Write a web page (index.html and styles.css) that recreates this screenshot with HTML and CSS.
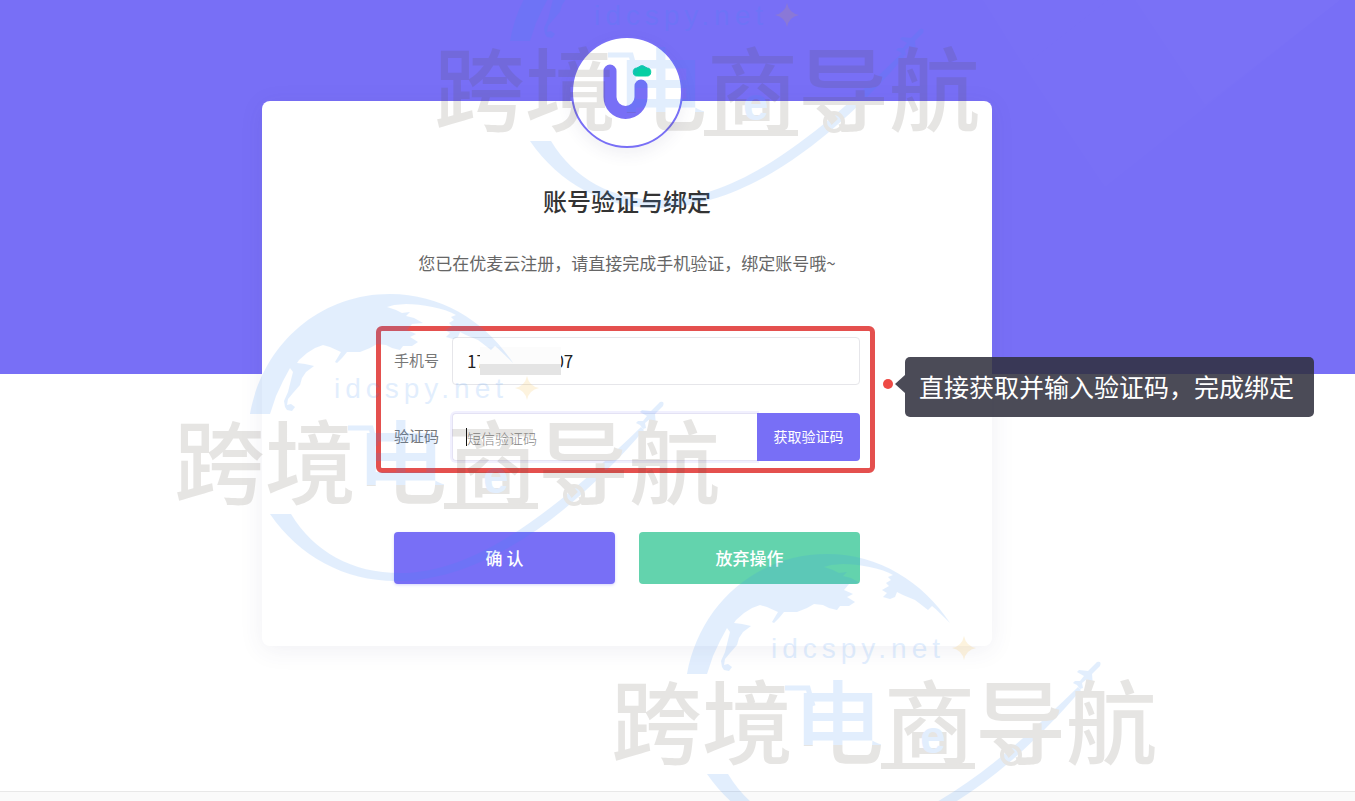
FILE: index.html
```html
<!DOCTYPE html>
<html lang="zh-CN">

<head>
  <meta charset="UTF-8">
  <meta name="viewport" content="width=device-width, initial-scale=1.0">
  <title>账号验证与绑定</title>
  <link rel="stylesheet" href="styles.css">
</head>

<body>
  <!-- shared shapes -->
  <svg class="defs" width="0" height="0" aria-hidden="true">
    <defs>
      <linearGradient id="cart" gradientUnits="userSpaceOnUse" x1="0" y1="138" x2="0" y2="229">
        <stop offset="0.74" stop-color="#378df8" />
        <stop offset="0.74" stop-color="#544c3e" />
      </linearGradient>
      <g id="globe">
        <path fill="#378df8" d="M90 134C102 66 158 14 230 14C282 14 326 42 353 83C346 76 340 70 335 66L331 70L322 63L318 60L306 55L300 52L298 57L293 59L286 57L290 53L285 50L292 46L289 43L294 40L291 37L296 35C284 28 262 24 246 24L234 25L227 27L236 30L242 33L250 32L246 36L254 38L263 43L252 44L247 50L256 54L250 57L258 62L252 66L243 66L240 70L232 68L226 65L217 64L210 68L200 72L187 72L182 78L177 83L175 82L181 72L170 67L163 65L155 68L147 73L139 80L137 83L145 84L154 86L146 92L142 98L140 105L133 113L128 119L127 125L131 124L135 127L132 131L127 130L125 127L124 121L128 112L131 100L133 92L130 88L123 101L116 116L110 134Z" />
        <path fill="#378df8" d="M110 234L131 234C154 272 192 293 240 293C324 293 410 216 481 147L484 150C423 221 333 301 236 301C184 301 139 276 110 234Z" />
        <path fill="#378df8" d="M500 122Q505 121 503 126L495 134L496 146L493 147L490 139L485 143L486 148L483 149L480 145L476 143L478 141L483 141L487 136L480 132L482 130L491 131Z" />
        <path fill="none" stroke="#378df8" stroke-width="5" d="M188 148H211L216 166" />
        <path fill="#f5b021" d="M367 96Q369 106 379 108Q369 110 367 120Q365 110 355 108Q365 106 367 96Z" />
        <circle cx="414" cy="215" r="9" fill="none" stroke="#544c3e" stroke-width="4" />
        <path fill="none" stroke="#544c3e" stroke-width="6" d="M284 226H378" />
      </g>
    </defs>
  </svg>

  <div class="page">
    <svg class="rays" width="375" height="374" viewBox="0 0 375 374" aria-hidden="true">
      <path d="M3 0H128L44 66Z" />
      <path d="M128 0H360L125 187L44 66Z" />
      <path d="M155 0H360L225 105Z" />
    </svg>

    <main class="main">
      <div class="card">
        <div class="logo">
          <svg width="108" height="108" viewBox="0 0 108 108" role="img" aria-label="优麦云">
            <path d="M37 33V59a15.500 15.500 0 0 0 31 0V48" fill="none" stroke="#786ff6" stroke-width="13" stroke-linecap="round" />
            <path d="M64.500 38a4 4 0 0 1 -0.500 -8a3 3 0 0 1 2 -1a4 4 0 0 1 6 0a3 3 0 0 1 2 1a4 4 0 0 1 -0.500 8Z" fill="#06cfa3" stroke="#06cfa3" stroke-width="1" />
          </svg>
        </div>
        <h1 class="title">账号验证与绑定</h1>
        <p class="tip">您已在优麦云注册，请直接完成手机验证，绑定账号哦~</p>

        <form id="bind-form">
          <div class="fields">
            <div class="row">
              <label for="phone">手机号</label>
              <div class="control">
                <input type="text" id="phone" name="phone" value="17                  07">
                <span class="mask"></span>
              </div>
            </div>
            <div class="row">
              <label for="code">验证码</label>
              <div class="control code">
                <input type="text" id="code" name="code" placeholder="短信验证码">
                <span class="caret"></span>
                <button type="button" class="get-code">获取验证码</button>
              </div>
            </div>
            <div class="highlight"></div>
            <div class="note">
              <span class="dot"></span>
              <span class="arrow"></span>
              <span class="note-text">直接获取并输入验证码，完成绑定</span>
            </div>
          </div>
          <div class="actions">
            <button type="submit" class="confirm">确 认</button>
            <button type="button" class="cancel">放弃操作</button>
          </div>
        </form>
      </div>
    </main>

    <footer class="footer"></footer>

    <svg class="watermark wm-top" width="580" height="310" viewBox="0 0 580 310" aria-hidden="true">
      <use href="#globe" />
      <text class="wm-site" x="174" y="118">idcspy.net</text>
      <text class="wm-name" x="14" y="217">跨境<tspan fill="url(#cart)">电</tspan>商导航</text>
      <text class="wm-e" x="323" y="213">e</text>
    </svg>
    <svg class="watermark wm-left" width="580" height="310" viewBox="0 0 580 310" aria-hidden="true">
      <use href="#globe" />
      <text class="wm-site" x="174" y="118">idcspy.net</text>
      <text class="wm-name" x="14" y="217">跨境<tspan fill="url(#cart)">电</tspan>商导航</text>
      <text class="wm-e" x="323" y="213">e</text>
    </svg>
    <svg class="watermark wm-bottom" width="580" height="310" viewBox="0 0 580 310" aria-hidden="true">
      <use href="#globe" />
      <text class="wm-site" x="174" y="118">idcspy.net</text>
      <text class="wm-name" x="14" y="217">跨境<tspan fill="url(#cart)">电</tspan>商导航</text>
      <text class="wm-e" x="323" y="213">e</text>
    </svg>
  </div>
</body>

</html>
```
FILE: styles.css
```css
* {
  box-sizing: border-box;
}

body {
  margin: 0;
  font-family: "Noto Sans CJK SC", sans-serif;
  color: #333;
}

.defs {
  position: absolute;
}

.page {
  position: relative;
  display: flex;
  flex-direction: column;
  min-height: 100vh;
  overflow: hidden;
  background: linear-gradient(#786ff6 374px, #fff 374px);
}

.rays {
  position: absolute;
  top: 0;
  right: 0;
  fill: rgba(255, 255, 255, 0.012);
}

.main {
  position: relative;
  flex: 1;
  padding: 101px 101px 40px 0;
}

.card {
  max-width: 730px;
  margin: 0 auto;
  padding: 0 132px 62px;
  background-color: #fff;
  border-radius: 8px;
  box-shadow: 0 4px 24px rgba(60, 60, 110, 0.08);
  display: flow-root;
}

.logo {
  width: 112px;
  height: 112px;
  margin: -65px auto 36px;
  border: 2px solid #786ff6;
  border-radius: 50%;
  background-color: #fff;
  box-shadow: 0 6px 16px rgba(60, 60, 110, 0.08);
}

.logo svg {
  display: block;
}

.title {
  margin: 0 0 33px;
  font-size: 24px;
  font-weight: 500;
  line-height: 34px;
  text-align: center;
}

.tip {
  margin: 0 -20px 62px;
  font-size: 17px;
  font-weight: 400;
  line-height: 24px;
  text-align: center;
  color: #666;
}

.fields {
  position: relative;
  display: flex;
  flex-direction: column;
  gap: 28px;
}

.row {
  display: grid;
  grid-template-columns: 58px 1fr;
  align-items: center;
}

label {
  padding-bottom: 4px;
  font-size: 15px;
  color: #777;
}

.control {
  position: relative;
  display: flex;
}

input {
  flex: 1;
  min-width: 0;
  height: 48px;
  padding: 0 14px 2px;
  border: 1px solid #e6e6ea;
  border-radius: 4px;
  background-color: #fff;
  font-family: inherit;
  font-size: 17px;
  color: #222;
  outline: none;
}

input::placeholder {
  font-size: 14px;
  font-weight: 300;
  color: #888;
}

.code input {
  border-color: #e4e2f4;
  border-right: none;
  border-radius: 4px 0 0 4px;
  box-shadow: 0 0 0 2px rgba(120, 111, 246, 0.1);
}

.mask {
  position: absolute;
  top: 10px;
  left: 28px;
  width: 81px;
  height: 28px;
  background: linear-gradient(#fcfcfc 17px, #e4e4e4 17px);
}

.caret {
  position: absolute;
  top: 15px;
  left: 14px;
  width: 1px;
  height: 18px;
  background-color: #111;
}

button {
  padding: 0 0 2px;
  border: none;
  font-family: inherit;
  color: #fff;
  cursor: pointer;
}

.get-code {
  position: relative;
  width: 103px;
  border-radius: 0 4px 4px 0;
  background-color: #786ff6;
  font-size: 14px;
}

/* red frame and callout over the form */
.highlight {
  position: absolute;
  inset: -11px -15px -12px -18px;
  border: 5px solid #e4504e;
  border-radius: 6px;
  pointer-events: none;
}

.note {
  position: absolute;
  top: 20px;
  left: calc(100% + 23px);
  display: flex;
  align-items: center;
  white-space: nowrap;
}

.dot {
  width: 10px;
  height: 10px;
  margin: 0 2px 6px 0;
  border-radius: 50%;
  background-color: #ee4a45;
}

.arrow {
  margin-bottom: 6px;
  border: 9px solid transparent;
  border-left: none;
  border-right: 10px solid rgba(48, 48, 62, 0.87);
}

.note-text {
  padding: 0 20px 2px 14px;
  border-radius: 5px;
  background-color: rgba(48, 48, 62, 0.87);
  font-size: 25px;
  line-height: 58px;
  color: #fff;
}

.actions {
  display: grid;
  grid-template-columns: 1fr 1fr;
  gap: 24px;
  margin-top: 71px;
}

.actions button {
  height: 52px;
  border-radius: 4px;
  font-size: 17px;
  font-weight: 500;
}

.confirm {
  background-color: #786ff6;
  box-shadow: 0 1px 3px rgba(120, 111, 246, 0.3);
}

.cancel {
  background-color: #63d3ad;
}

.footer {
  height: 10px;
  border-top: 1px solid #e8e8e8;
  background-color: #fafafa;
}

.watermark {
  position: absolute;
  opacity: 0.14;
  pointer-events: none;
}

.wm-top {
  top: -93px;
  left: 420px;
}

.wm-left {
  top: 280px;
  left: 160px;
}

.wm-bottom {
  top: 540px;
  left: 597px;
}

.wm-site {
  font-family: "Liberation Sans", Arial, sans-serif;
  font-size: 28px;
  letter-spacing: 5px;
  fill: #378df8;
}

.wm-name {
  font-size: 91px;
  font-weight: 500;
  fill: #544c3e;
}

.wm-e {
  font-family: "Liberation Sans", Arial, sans-serif;
  font-size: 46px;
  font-weight: 700;
  fill: #378df8;
}
```
